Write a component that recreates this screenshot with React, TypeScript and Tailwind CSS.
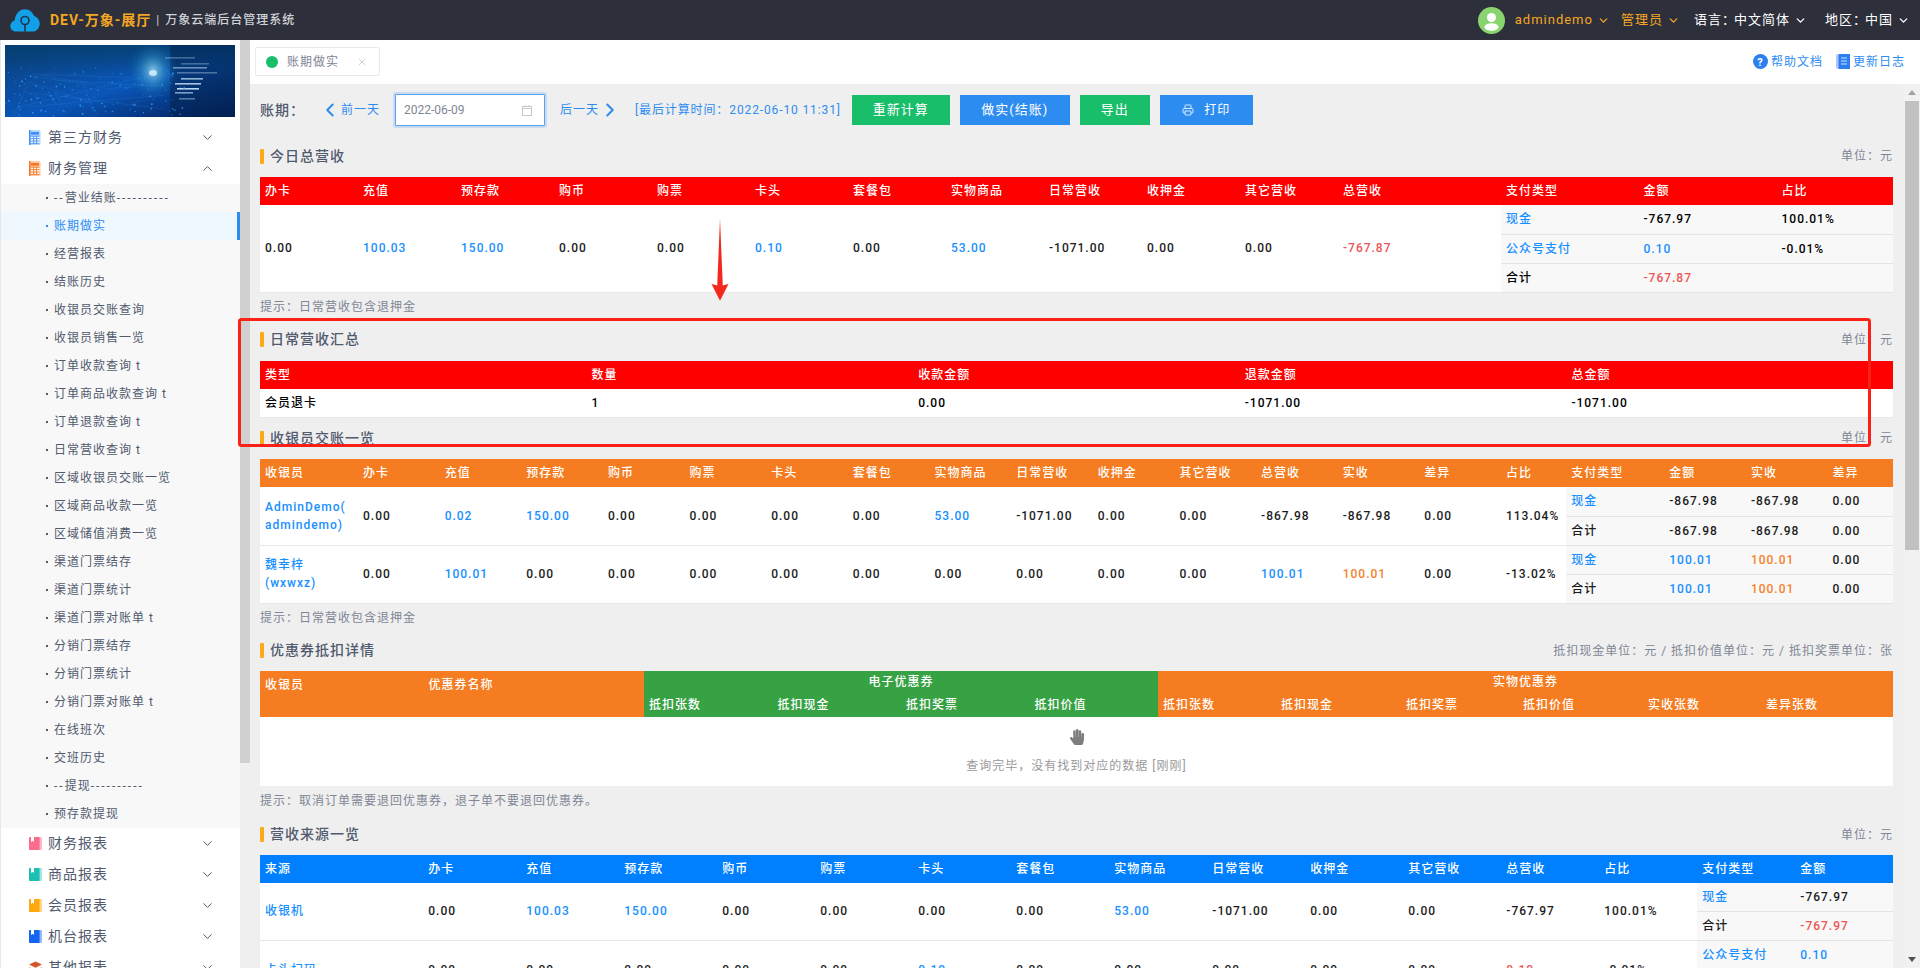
import React from "react";
import { ChevronDown, ChevronUp, ChevronLeft, ChevronRight, X, Printer } from "lucide-react";
import { FaHandPaper } from "react-icons/fa";

type Tone = "b" | "r" | "o" | undefined;
type Cell = string | [string, Tone];

const toneClass = (t: Tone) =>
  t === "b" ? "text-[#1890ff]" : t === "r" ? "text-[#ed5454]" : t === "o" ? "text-[#f5822a]" : "text-[#1c1c1c]";

const Val = ({ c }: { c: Cell }) =>
  typeof c === "string" ? <span className="text-[#1c1c1c]">{c}</span> : <span className={toneClass(c[1])}>{c[0]}</span>;

const B = (s: string): Cell => [s, "b"];
const R = (s: string): Cell => [s, "r"];
const O = (s: string): Cell => [s, "o"];

const th = "px-[5px] text-left font-medium text-white border-0";
const td = "px-[5px] font-medium border-b border-[#e8e8e8] bg-white";
const sd = "px-[5px] font-medium border-b border-[#e4e4e4] bg-[#f8f8f8]";

function Title({ text, right }: { text: string; right: string }) {
  return (
    <div className="flex h-6 items-center justify-between">
      <div className="flex items-center">
        <span className="mr-[6px] h-[15px] w-[4px] rounded-[1px] bg-[#fbab18]" />
        <span className="text-[14px] font-medium text-[#515a6e]">{text}</span>
      </div>
      <span className="text-[#808695]">{right}</span>
    </div>
  );
}

function Hint({ text, className }: { text: string; className: string }) {
  return <div className={`flex items-center text-[#808695] ${className}`}>{text}</div>;
}

function Table1() {
  const heads = ["办卡", "充值", "预存款", "购币", "购票", "卡头", "套餐包", "实物商品", "日常营收", "收押金", "其它营收", "总营收", "支付类型", "金额", "占比"];
  const vals: Cell[] = ["0.00", B("100.03"), B("150.00"), "0.00", "0.00", B("0.10"), "0.00", B("53.00"), "-1071.00", "0.00", "0.00", R("-767.87")];
  return (
    <table className="mt-[9px] w-full table-fixed border-collapse">
      <colgroup>
        {vals.slice(0, 11).map((_, i) => <col key={i} className="w-[98px]" />)}
        <col className="w-[163px]" />
        <col className="w-[137.5px]" />
        <col className="w-[138px]" />
        <col />
      </colgroup>
      <thead>
        <tr className="h-[28px] bg-[#ff0000]">{heads.map((h) => <th key={h} className={th}>{h}</th>)}</tr>
      </thead>
      <tbody>
        <tr className="h-[29px]">
          {vals.map((v, i) => <td key={i} rowSpan={3} className={td}><Val c={v} /></td>)}
          <td className={sd}><Val c={B("现金")} /></td>
          <td className={sd}>-767.97</td>
          <td className={sd}>100.01%</td>
        </tr>
        <tr className="h-[29px]">
          <td className={sd}><Val c={B("公众号支付")} /></td>
          <td className={sd}><Val c={B("0.10")} /></td>
          <td className={sd}>-0.01%</td>
        </tr>
        <tr className="h-[29px]">
          <td className={sd}>合计</td>
          <td className={sd}><Val c={R("-767.87")} /></td>
          <td className={sd} />
        </tr>
      </tbody>
    </table>
  );
}

function Table2() {
  const heads = ["类型", "数量", "收款金额", "退款金额", "总金额"];
  const vals = ["会员退卡", "1", "0.00", "-1071.00", "-1071.00"];
  return (
    <table className="mt-[9px] w-full table-fixed border-collapse">
      <thead>
        <tr className="h-[28px] bg-[#ff0000]">{heads.map((h) => <th key={h} className={th}>{h}</th>)}</tr>
      </thead>
      <tbody>
        <tr className="h-[29px]">{vals.map((v, i) => <td key={i} className={td}>{v}</td>)}</tr>
      </tbody>
    </table>
  );
}

function Table3() {
  const heads = ["收银员", "办卡", "充值", "预存款", "购币", "购票", "卡头", "套餐包", "实物商品", "日常营收", "收押金", "其它营收", "总营收", "实收", "差异", "占比", "支付类型", "金额", "实收", "差异"];
  const rows: { name: React.ReactNode; vals: Cell[]; pay: Cell[][] }[] = [
    {
      name: <>AdminDemo(<br />admindemo)</>,
      vals: ["0.00", B("0.02"), B("150.00"), "0.00", "0.00", "0.00", "0.00", B("53.00"), "-1071.00", "0.00", "0.00", "-867.98", "-867.98", "0.00", "113.04%"],
      pay: [[B("现金"), "-867.98", "-867.98", "0.00"], ["合计", "-867.98", "-867.98", "0.00"]],
    },
    {
      name: <>魏幸梓<br />(wxwxz)</>,
      vals: ["0.00", B("100.01"), "0.00", "0.00", "0.00", "0.00", "0.00", "0.00", "0.00", "0.00", "0.00", B("100.01"), O("100.01"), "0.00", "-13.02%"],
      pay: [[B("现金"), B("100.01"), O("100.01"), "0.00"], ["合计", B("100.01"), O("100.01"), "0.00"]],
    },
  ];
  return (
    <table className="mt-[9px] w-full table-fixed border-collapse">
      <colgroup>
        <col className="w-[98px]" />
        {heads.slice(1, 15).map((_, i) => <col key={i} className="w-[81.65px]" />)}
        <col className="w-[65.3px]" />
        <col className="w-[98px]" />
        <col className="w-[81.65px]" />
        <col className="w-[81.65px]" />
        <col />
      </colgroup>
      <thead>
        <tr className="h-[28px] bg-[#f57c20]">{heads.map((h, i) => <th key={i} className={th}>{h}</th>)}</tr>
      </thead>
      <tbody>
        {rows.map((r, ri) => (
          <React.Fragment key={ri}>
            <tr className="h-[29px]">
              <td rowSpan={2} className={`${td} leading-[18px] text-[#1890ff]`}>{r.name}</td>
              {r.vals.map((v, i) => <td key={i} rowSpan={2} className={`${td} whitespace-nowrap`}><Val c={v} /></td>)}
              {r.pay[0].map((v, i) => <td key={i} className={sd}><Val c={v} /></td>)}
            </tr>
            <tr className="h-[29px]">
              {r.pay[1].map((v, i) => <td key={i} className={sd}><Val c={v} /></td>)}
            </tr>
          </React.Fragment>
        ))}
      </tbody>
    </table>
  );
}

function Table4() {
  const green = ["抵扣张数", "抵扣现金", "抵扣奖票", "抵扣价值"];
  const orange: [string, string][] = [["抵扣张数", "w-[118px]"], ["抵扣现金", "w-[125px]"], ["抵扣奖票", "w-[117px]"], ["抵扣价值", "w-[125px]"], ["实收张数", "w-[118px]"], ["差异张数", "w-auto"]];
  return (
    <table className="mt-[8px] w-full table-fixed border-collapse">
      <colgroup>
        <col className="w-[163.5px]" />
        <col className="w-[220.5px]" />
        {green.map((g) => <col key={g} className="w-[128.5px]" />)}
        {orange.map(([k, w]) => <col key={k} className={w} />)}
      </colgroup>
      <thead>
        <tr className="h-[23px]">
          <th rowSpan={2} className={`${th} bg-[#f57c20] pb-[20px] pt-[3px]`}>收银员</th>
          <th rowSpan={2} className={`${th} bg-[#f57c20] pb-[20px] pt-[3px]`}>优惠券名称</th>
          <th colSpan={4} className="bg-[#37a244] text-center font-medium text-white">电子优惠券</th>
          <th colSpan={6} className="bg-[#f57c20] text-center font-medium text-white">实物优惠券</th>
        </tr>
        <tr className="h-[23px]">
          {green.map((g) => <th key={g} className={`${th} bg-[#37a244]`}>{g}</th>)}
          {orange.map(([k]) => <th key={k} className={`${th} bg-[#f57c20]`}>{k}</th>)}
        </tr>
      </thead>
      <tbody>
        <tr className="h-[69px]">
          <td colSpan={12} className="bg-white text-center">
            <div className="flex flex-col items-center pt-[1px]">
              <FaHandPaper className="h-[16px] w-[14px] text-[#7d7d7d]" />
              <span className="mt-[12px] font-normal text-[#999999]">查询完毕，没有找到对应的数据 [刚刚]</span>
            </div>
          </td>
        </tr>
      </tbody>
    </table>
  );
}

function Table5() {
  const heads = ["来源", "办卡", "充值", "预存款", "购币", "购票", "卡头", "套餐包", "实物商品", "日常营收", "收押金", "其它营收", "总营收", "占比", "支付类型", "金额"];
  const rows: { name: string; vals: Cell[]; pay: Cell[][] }[] = [
    {
      name: "收银机",
      vals: ["0.00", B("100.03"), B("150.00"), "0.00", "0.00", "0.00", "0.00", B("53.00"), "-1071.00", "0.00", "0.00", "-767.97", "100.01%"],
      pay: [[B("现金"), "-767.97"], ["合计", R("-767.97")]],
    },
    {
      name: "卡头扫码",
      vals: ["0.00", "0.00", "0.00", "0.00", "0.00", B("0.10"), "0.00", "0.00", "0.00", "0.00", "0.00", R("0.10"), "-0.01%"],
      pay: [[B("公众号支付"), B("0.10")], ["合计", R("0.10")]],
    },
  ];
  return (
    <table className="mt-[8px] w-full table-fixed border-collapse">
      <colgroup>
        <col className="w-[163.3px]" />
        {heads.slice(1).map((_, i) => <col key={i} className="w-[98px]" />)}
      </colgroup>
      <thead>
        <tr className="h-[28px] bg-[#0080ff]">{heads.map((h) => <th key={h} className={th}>{h}</th>)}</tr>
      </thead>
      <tbody>
        {rows.map((r) => (
          <React.Fragment key={r.name}>
            <tr className="h-[29px]">
              <td rowSpan={2} className={td}><Val c={B(r.name)} /></td>
              {r.vals.map((v, i) => <td key={i} rowSpan={2} className={td}><Val c={v} /></td>)}
              {r.pay[0].map((v, i) => <td key={i} className={sd}><Val c={v} /></td>)}
            </tr>
            <tr className="h-[29px]">
              {r.pay[1].map((v, i) => <td key={i} className={sd}><Val c={v} /></td>)}
            </tr>
          </React.Fragment>
        ))}
      </tbody>
    </table>
  );
}

function Logo() {
  return (
    <svg width="30" height="23" viewBox="0 0 30 23" className="shrink-0">
      <path d="M6 22.5C2.5 22.5 0.3 20 0.3 17c0-2.8 1.9-5 4.4-5.6C5.2 5 9.5 0.3 15 0.3c4.3 0 7.7 2.8 9 6.8 3 .8 5.7 3.7 5.7 7.6 0 4.4-3.3 7.8-7 7.8z" fill="#12a0e8" />
      <circle cx="15" cy="11.5" r="4" fill="none" stroke="#1c3550" strokeWidth="1.6" />
      <path d="M15 15.5v7" stroke="#1c3550" strokeWidth="1.6" />
    </svg>
  );
}

const hash = (n: number) => {
  const v = Math.sin(n * 12.9898) * 43758.5453;
  return v - Math.floor(v);
};

function Banner() {
  const dots = Array.from({ length: 170 }, (_, i) => ({
    x: hash(i + 1) * 180,
    y: 22 + hash(i + 300) * 50,
    r: 0.25 + hash(i + 600) * 0.75,
    o: 0.3 + hash(i + 900) * 0.7,
  }));
  const lines = Array.from({ length: 14 }, (_, i) => ({
    x1: hash(i + 40) * 170,
    y1: 28 + hash(i + 70) * 44,
    x2: hash(i + 90) * 170,
    y2: 28 + hash(i + 120) * 44,
  }));
  const streaks = [
    [168, 22, 34, 0.5], [172, 27, 40, 0.35], [160, 12, 30, 0.3], [176, 33, 22, 0.7], [170, 38, 26, 0.8], [172, 43, 22, 0.9], [170, 47, 18, 0.6], [176, 18, 28, 0.3], [174, 53, 16, 0.4],
  ];
  return (
    <svg viewBox="0 0 230 72" className="block h-[72px] w-[230px]" preserveAspectRatio="none">
      <defs>
        <linearGradient id="bg" x1="0" y1="0" x2="1" y2="1">
          <stop offset="0" stopColor="#0b3f7c" />
          <stop offset="0.55" stopColor="#0a56b8" />
          <stop offset="1" stopColor="#021a52" />
        </linearGradient>
        <radialGradient id="face" cx="0.5" cy="0.5" r="0.5">
          <stop offset="0" stopColor="#9fdcf0" stopOpacity="0.85" />
          <stop offset="0.5" stopColor="#3a9ccc" stopOpacity="0.4" />
          <stop offset="1" stopColor="#0b5aa8" stopOpacity="0" />
        </radialGradient>
        <linearGradient id="top" x1="0" y1="0" x2="0" y2="1">
          <stop offset="0" stopColor="#04406f" stopOpacity="0.85" />
          <stop offset="1" stopColor="#04406f" stopOpacity="0" />
        </linearGradient>
      </defs>
      <rect width="230" height="72" fill="url(#bg)" />
      <rect width="230" height="30" fill="url(#top)" />
      <rect x="165" y="0" width="65" height="72" fill="#03224f" opacity="0.55" />
      <ellipse cx="148" cy="26" rx="26" ry="30" fill="url(#face)" />
      <ellipse cx="148" cy="28" rx="4" ry="3" fill="#d8f4ff" opacity="0.8" />
      {streaks.map(([x, y, w, o], i) => <rect key={i} x={x} y={y} width={w} height="1.6" fill="#cdeaff" opacity={o} />)}
      {lines.map((l, i) => <line key={i} {...l} stroke="#3fa0f5" strokeWidth="0.3" opacity="0.5" />)}
      {dots.map((d, i) => <circle key={i} cx={d.x} cy={d.y} r={d.r} fill="#2ea3ff" opacity={d.o} />)}
    </svg>
  );
}

function Calc({ c, l }: { c: string; l: string }) {
  return (
    <svg width="12" height="15" viewBox="0 0 12 15" className="shrink-0">
      <rect x="0.5" y="0" width="11" height="15" rx="1.5" fill={l} />
      <rect x="0" y="0" width="1.5" height="15" fill={c} />
      <rect x="2" y="2" width="8" height="2.6" fill={c} />
      <path d="M2 6.2h8.4v7H2z" fill="#fff" />
      <path d="M2 6.2h8.4M2 8.6h8.4M2 11h8.4M2 13.3h8.4M4.7 6v7.4M7.6 6v7.4" stroke={c} strokeWidth="0.9" />
    </svg>
  );
}

function BookI({ c, l }: { c: string; l: string }) {
  return (
    <svg width="13" height="13" viewBox="0 0 13 13" className="shrink-0">
      <rect x="0" y="0" width="13" height="13" rx="1" fill={l} />
      <rect x="0" y="0" width="10.6" height="13" rx="1" fill={c} />
      <path d="M2 0h3v5L3.5 3.8 2 5z" fill="#fff" />
    </svg>
  );
}

function Layers() {
  return (
    <svg width="13" height="13" viewBox="0 0 13 13" className="shrink-0">
      <path d="M6.5 0.5L13 3.6 6.5 6.8 0 3.6z" fill="#d4572a" />
      <path d="M0 6.2l6.5 3 6.5-3v1.8L6.5 11 0 8z" fill="#e87a3a" />
    </svg>
  );
}

function Top({ icon, label, open }: { icon: React.ReactNode; label: string; open?: boolean }) {
  return (
    <div className="flex h-[31px] items-center bg-white pl-[28px] pr-[25px] text-[14px] text-[#515a6e]">
      <span className="flex w-[19px] items-center">{icon}</span>
      <span className="flex-1">{label}</span>
      {open ? <ChevronUp size={15} strokeWidth={1.6} /> : <ChevronDown size={15} strokeWidth={1.6} />}
    </div>
  );
}

function Sub({ label, active }: { label: string; active?: boolean }) {
  return (
    <div className={active
      ? "flex h-[28px] items-center border-r-[3px] border-[#2d8cf0] bg-[#f0f8ff] pl-[45px] text-[#2d8cf0]"
      : "flex h-[28px] items-center pl-[45px] text-[#515a6e]"}>
      <span className={active ? "mr-[6px] h-[2px] w-[2px] bg-[#2d8cf0]" : "mr-[6px] h-[2px] w-[2px] bg-[#515a6e]"} />
      <span className="whitespace-pre">
        {label.split(/(-+)/).map((part, i) =>
          part.startsWith("-") ? <span key={i} className="tracking-[2px]">{part}</span> : part
        )}
      </span>
    </div>
  );
}

const subs = ["--营业结账----------", "账期做实", "经营报表", "结账历史", "收银员交账查询", "收银员销售一览", "订单收款查询 t", "订单商品收款查询 t", "订单退款查询 t", "日常营收查询 t", "区域收银员交账一览", "区域商品收款一览", "区域储值消费一览", "渠道门票结存", "渠道门票统计", "渠道门票对账单 t", "分销门票结存", "分销门票统计", "分销门票对账单 t", "在线班次", "交班历史", "--提现----------", "预存款提现"];

function Sidebar() {
  return (
    <aside className="flex h-full w-[250px] shrink-0">
      <div className="h-full w-[240px] overflow-hidden border-l border-[#e8e8e8] bg-white">
        <div className="pb-[5px] pl-[4px] pt-[5px]"><Banner /></div>
        <Top icon={<Calc c="#3f8ef5" l="#b9d6fb" />} label="第三方财务" />
        <Top icon={<Calc c="#f5751f" l="#fbc9a6" />} label="财务管理" open />
        <div className="bg-[#f8f8f8]">
          {subs.map((s, i) => <Sub key={i} label={s} active={i === 1} />)}
        </div>
        <Top icon={<BookI c="#fb6b8a" l="#fdb8c8" />} label="财务报表" />
        <Top icon={<BookI c="#1dbfb0" l="#9fe6df" />} label="商品报表" />
        <Top icon={<BookI c="#fda90e" l="#fdd68c" />} label="会员报表" />
        <Top icon={<BookI c="#1565f5" l="#94b8fa" />} label="机台报表" />
        <Top icon={<Layers />} label="其他报表" />
      </div>
      <div className="flex h-full w-[10px] flex-col bg-[#f0f0f0]">
        <div className="h-[723px] bg-[#d0d0d0]" />
      </div>
    </aside>
  );
}

function Header() {
  return (
    <header className="flex h-[40px] shrink-0 items-center bg-[#2d303b] pl-[10px] pr-[10px] text-[13px] text-white">
      <Logo />
      <span className="ml-[10px] text-[14px] font-bold text-[#f5a623]">DEV-万象-展厅</span>
      <span className="mx-[5px] text-[12px] text-[#c5c8ce]">|</span>
      <span className="text-[12px] font-medium text-[#d0d3d8]">万象云端后台管理系统</span>
      <div className="ml-auto flex items-center">
        <span className="relative flex h-[27px] w-[27px] items-center justify-center overflow-hidden rounded-full bg-[#8ad46f]">
          <svg width="27" height="27" viewBox="0 0 27 27">
            <circle cx="13.5" cy="10.5" r="4.5" fill="#fff" />
            <ellipse cx="13.5" cy="20" rx="7" ry="3.8" fill="#fff" />
          </svg>
        </span>
        <span className="ml-[10px] text-[#f5a623]">admindemo</span>
        <ChevronDown size={13} strokeWidth={2.4} className="ml-[4px] text-[#f5a623]" />
        <span className="ml-[11px] text-[#f5a623]">管理员</span>
        <ChevronDown size={13} strokeWidth={2.4} className="ml-[4px] text-[#f5a623]" />
        <span className="ml-[14px]">语言：</span>
        <span className="ml-[-2px]">中文简体</span>
        <ChevronDown size={13} strokeWidth={2.4} className="ml-[4px]" />
        <span className="ml-[18px]">地区：</span>
        <span className="ml-[-2px]">中国</span>
        <ChevronDown size={13} strokeWidth={2.4} className="ml-[4px]" />
      </div>
    </header>
  );
}

function TabBar() {
  return (
    <div className="flex h-[44px] shrink-0 items-start bg-white pl-[5px] pr-[15px] pt-[7px]">
      <div className="flex h-[29px] w-[125px] items-center rounded-[2px] border border-[#e8eaec] bg-white pl-[10px] text-[#808695]">
        <span className="h-[12px] w-[12px] rounded-full bg-[#19be6b]" />
        <span className="ml-[9px]">账期做实</span>
        <X size={12} className="ml-[17px] text-[#b5b5b5]" strokeWidth={1.3} />
      </div>
      <div className="ml-auto flex h-[29px] items-center text-[#2d8cf0]">
        <svg width="15" height="15" viewBox="0 0 15 15">
          <circle cx="7.5" cy="7.5" r="7.5" fill="#2d7ff0" />
          <text x="7.5" y="11.5" textAnchor="middle" fontSize="11" fontWeight="700" fill="#fff">?</text>
        </svg>
        <span className="ml-[3px]">帮助文档</span>
        <svg width="14" height="15" viewBox="0 0 14 15" className="ml-[13px]">
          <rect x="0" y="0.5" width="14" height="14" fill="#b9c4fa" />
          <rect x="2.5" y="0" width="11.5" height="15" fill="#2d7ff0" />
          <path d="M5 4h6M5 7h6M5 10h6" stroke="#cfe2fd" strokeWidth="1" />
        </svg>
        <span className="ml-[3px]">更新日志</span>
      </div>
    </div>
  );
}

function Toolbar() {
  return (
    <div className="flex h-[32px] items-center">
      <span className="w-[62px] text-[14px] font-medium text-[#515a6e]">账期：</span>
      <span className="flex items-center text-[#2d8cf0]">
        <ChevronLeft size={22} strokeWidth={2.2} className="ml-[-3px]" />
        前一天
      </span>
      <div className="ml-[15px] flex h-[32px] w-[150px] items-center rounded-[1px] border border-[#5a9ff0] bg-white pl-[8px] pr-[12px] text-[12px] tracking-normal text-[#808695] shadow-[0_0_0_2px_rgba(45,140,240,0.2)]">
        <span className="flex-1">2022-06-09</span>
        <svg width="10" height="11" viewBox="0 0 10 11"><rect x="0.5" y="1.5" width="9" height="9" fill="none" stroke="#c5c8ce" /><path d="M0.5 3.5h9M3 0v2M7 0v2" stroke="#c5c8ce" /></svg>
      </div>
      <span className="ml-[15px] flex items-center text-[#2d8cf0]">
        后一天
        <ChevronRight size={22} strokeWidth={2.2} />
      </span>
      <span className="ml-[14px] tracking-[0.88px] text-[#2d8cf0]">[最后计算时间：2022-06-10 11:31]</span>
      <button className="ml-[11px] h-[30px] w-[98px] bg-[#19be6b] text-[13px] text-white">重新计算</button>
      <button className="ml-[10px] h-[30px] w-[110px] bg-[#2d8cf0] text-[13px] text-white">做实(结账)</button>
      <button className="ml-[10px] h-[30px] w-[70px] bg-[#19be6b] text-[13px] text-white">导出</button>
      <button className="ml-[10px] flex h-[30px] w-[93px] items-center justify-center bg-[#2d8cf0] text-white">
        <Printer size={12} className="mr-[10px] opacity-80" />
        打印
      </button>
    </div>
  );
}

function ScrollBar() {
  return (
    <div className="flex h-full w-[17px] shrink-0 flex-col items-center bg-[#f1f1f1]">
      <div className="flex h-[17px] w-full items-center justify-center">
        <span className="h-0 w-0 border-x-[4px] border-b-[5px] border-x-transparent border-b-[#a3a3a3]" />
      </div>
      <div className="h-[449px] w-[14px] bg-[#c1c1c1]" />
      <div className="mt-auto flex h-[17px] w-full items-center justify-center">
        <span className="h-0 w-0 border-x-[4px] border-t-[5px] border-x-transparent border-t-[#505050]" />
      </div>
    </div>
  );
}

export default function App() {
  return (
    <div className="relative flex h-screen w-screen flex-col overflow-hidden bg-[#efefef] font-[Roboto,'Noto_Sans_CJK_SC',sans-serif] text-[12px] tracking-[1px]">
      <Header />
      <div className="flex min-h-0 flex-1">
        <Sidebar />
        <main className="flex min-w-0 flex-1 flex-col">
          <TabBar />
          <div className="flex min-h-0 flex-1">
            <div className="min-w-0 flex-1 overflow-hidden px-[10px] pt-[10px]">
              <Toolbar />
              <div className="mt-[18px]"><Title text="今日总营收" right="单位：元" /></div>
              <Table1 />
              <Hint className="h-[29px]" text="提示：日常营收包含退押金" />
              <div className="mt-[6px]"><Title text="日常营收汇总" right="单位：元" /></div>
              <Table2 />
              <div className="mt-[8px]"><Title text="收银员交账一览" right="单位：元" /></div>
              <Table3 />
              <Hint className="-mt-[1px] h-[30px]" text="提示：日常营收包含退押金" />
              <div className="mt-[6px]"><Title text="优惠券抵扣详情" right="抵扣现金单位：元 / 抵扣价值单位：元 / 抵扣奖票单位：张" /></div>
              <Table4 />
              <Hint className="h-[30px]" text="提示：取消订单需要退回优惠券，退子单不要退回优惠券。" />
              <div className="mt-[7px]"><Title text="营收来源一览" right="单位：元" /></div>
              <Table5 />
            </div>
            <ScrollBar />
          </div>
        </main>
      </div>
      <svg className="pointer-events-none absolute inset-0 h-full w-full" viewBox="0 0 1920 968">
        <rect x="239.5" y="319.5" width="1630" height="126" rx="2" fill="none" stroke="#fb2116" strokeWidth="3" />
        <path d="M720 219L722.8 285.5L728.5 284L720 300.7L711.5 284L717.2 285.5Z" fill="#f5281e" />
      </svg>
    </div>
  );
}
